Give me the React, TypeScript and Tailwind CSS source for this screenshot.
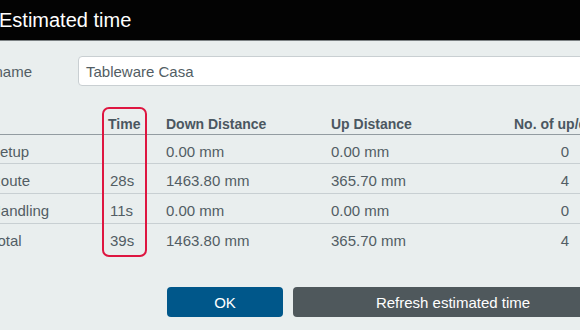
import React from "react";

const rows = [
  { label: "Setup", time: "", down: "0.00 mm", up: "0.00 mm", n: "0" },
  { label: "Route", time: "28s", down: "1463.80 mm", up: "365.70 mm", n: "4" },
  { label: "Handling", time: "11s", down: "0.00 mm", up: "0.00 mm", n: "0" },
  { label: "Total", time: "39s", down: "1463.80 mm", up: "365.70 mm", n: "4" },
];

const heights = ["h-[29px] border-b", "h-[30px] border-b", "h-[30px] border-b", "h-[30px]"];

export default function App() {
  return (
    <div
      className="relative w-[580px] h-[330px] overflow-hidden bg-[#e9eeee] text-[#525d64]"
      style={{ fontFamily: '"Liberation Sans", Arial, sans-serif' }}
    >
      <div className="h-[41px] bg-[#030303] border-b border-[#7b8183] text-white text-[20px] leading-[40px] -ml-[1px] whitespace-nowrap">
        Estimated time
      </div>

      <div className="mt-[15px] flex items-center h-[30px]">
        <div className="w-[32px] shrink-0 flex justify-end mr-[46px] whitespace-nowrap text-[15px] leading-[20px] pt-[2px]">
          Part name
        </div>
        <div className="flex-1 -mr-[20px] h-[30px] bg-white border border-[#c9cfd2] rounded-[4px] pl-[7px] flex items-center text-[15px] leading-[20px] pt-[2px] whitespace-nowrap">
          Tableware Casa
        </div>
      </div>

      <div className="mt-[18px] -ml-[10px] w-[620px] text-[15px] leading-[20px]">
        <div className="h-[31px] border-b border-[#939ca1] grid grid-cols-[118px_58px_165px_183px_1fr] items-end font-bold text-[14px] text-[#4b5761] whitespace-nowrap">
          <div></div>
          <div>Time</div>
          <div>Down Distance</div>
          <div>Up Distance</div>
          <div>No. of up/down</div>
        </div>
        {rows.map((r, i) => (
          <div
            key={r.label}
            className={`${heights[i]} border-[#c8cfd2] grid grid-cols-[118px_58px_165px_183px_1fr] items-start pt-[7px] whitespace-nowrap`}
          >
            <div>{r.label}</div>
            <div className="pl-[2px]">{r.time}</div>
            <div>{r.down}</div>
            <div>{r.up}</div>
            <div className="w-[55px] text-right">{r.n}</div>
          </div>
        ))}
      </div>

      <div className="mt-[33px] flex gap-[10px] pl-[167px] whitespace-nowrap">
        <button className="w-[116px] h-[30px] shrink-0 rounded-[4px] bg-[#00578a] text-white text-[15px] leading-[20px] pt-[1px]">
          OK
        </button>
        <button className="w-[320px] h-[30px] shrink-0 rounded-[4px] bg-[#4f585c] text-white text-[15px] leading-[20px] pt-[1px]">
          Refresh estimated time
        </button>
      </div>

      <div className="absolute left-[102px] top-[107px] w-[45px] h-[150px] border-2 border-[#de1640] rounded-[7px] pointer-events-none"></div>
    </div>
  );
}
